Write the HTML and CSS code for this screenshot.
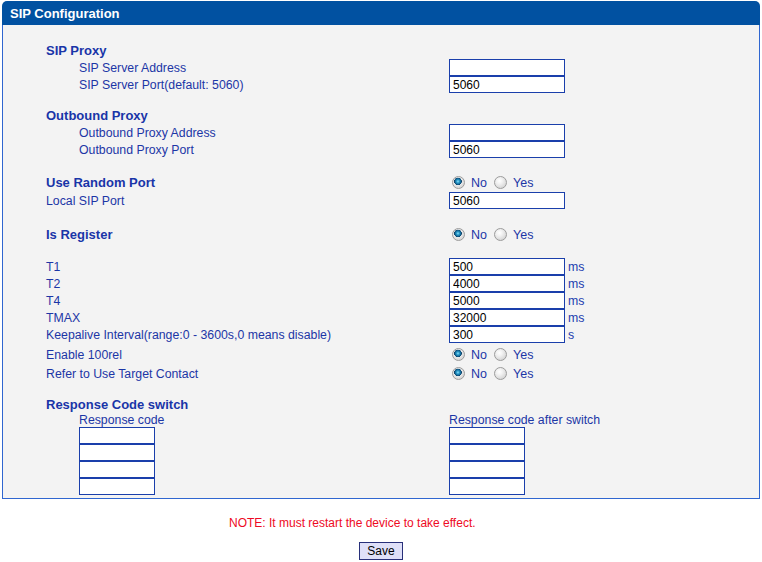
FILE: index.html
```html
<!DOCTYPE html>
<html lang="en">

<head>
    <meta charset="UTF-8">
    <meta name="viewport" content="width=device-width, initial-scale=1.0">
    <title>SIP Configuration</title>
    <link rel="stylesheet" href="styles.css">
</head>

<body>
    <div class="panel">
        <div class="panel-title">SIP Configuration</div>
        <div class="panel-body">
            <!-- SIP proxy -->
            <div class="row head"><span class="label">SIP Proxy</span></div>
            <div class="row">
                <span class="label sub">SIP Server Address</span>
                <span class="ctl"><input type="text" class="txt" value=""></span>
            </div>
            <div class="row">
                <span class="label sub">SIP Server Port(default: 5060)</span>
                <span class="ctl"><input type="text" class="txt" value="5060"></span>
            </div>

            <!-- outbound proxy -->
            <div class="row head gap14"><span class="label">Outbound Proxy</span></div>
            <div class="row">
                <span class="label sub">Outbound Proxy Address</span>
                <span class="ctl"><input type="text" class="txt" value=""></span>
            </div>
            <div class="row">
                <span class="label sub">Outbound Proxy Port</span>
                <span class="ctl"><input type="text" class="txt" value="5060"></span>
            </div>

            <div class="row radio-row head gap15">
                <span class="label">Use Random Port</span>
                <span class="ctl">
                    <input type="radio" name="randport" checked><span class="opt">No</span>
                    <input type="radio" name="randport"><span class="opt">Yes</span>
                </span>
            </div>
            <div class="row">
                <span class="label">Local SIP Port</span>
                <span class="ctl"><input type="text" class="txt" value="5060"></span>
            </div>

            <div class="row radio-row head gap16">
                <span class="label">Is Register</span>
                <span class="ctl">
                    <input type="radio" name="register" checked><span class="opt">No</span>
                    <input type="radio" name="register"><span class="opt">Yes</span>
                </span>
            </div>

            <!-- timers -->
            <div class="row gap14">
                <span class="label">T1</span>
                <span class="ctl"><input type="text" class="txt" value="500"><span class="unit">ms</span></span>
            </div>
            <div class="row">
                <span class="label">T2</span>
                <span class="ctl"><input type="text" class="txt" value="4000"><span class="unit">ms</span></span>
            </div>
            <div class="row">
                <span class="label">T4</span>
                <span class="ctl"><input type="text" class="txt" value="5000"><span class="unit">ms</span></span>
            </div>
            <div class="row">
                <span class="label">TMAX</span>
                <span class="ctl"><input type="text" class="txt" value="32000"><span class="unit">ms</span></span>
            </div>
            <div class="row">
                <span class="label">Keepalive Interval(range:0 - 3600s,0 means disable)</span>
                <span class="ctl"><input type="text" class="txt" value="300"><span class="unit">s</span></span>
            </div>

            <div class="row radio-row gap2">
                <span class="label">Enable 100rel</span>
                <span class="ctl">
                    <input type="radio" name="rel100" checked><span class="opt">No</span>
                    <input type="radio" name="rel100"><span class="opt">Yes</span>
                </span>
            </div>
            <div class="row radio-row">
                <span class="label">Refer to Use Target Contact</span>
                <span class="ctl">
                    <input type="radio" name="refer" checked><span class="opt">No</span>
                    <input type="radio" name="refer"><span class="opt">Yes</span>
                </span>
            </div>

            <!-- response code switch -->
            <div class="row head short gap13"><span class="label">Response Code switch</span></div>
            <div class="row caps">
                <span class="label sub">Response code</span>
                <span class="ctl">Response code after switch</span>
            </div>
            <div class="codes">
                <div class="code-col sub-col">
                    <input type="text" class="txt small">
                    <input type="text" class="txt small">
                    <input type="text" class="txt small">
                    <input type="text" class="txt small">
                </div>
                <div class="code-col">
                    <input type="text" class="txt small">
                    <input type="text" class="txt small">
                    <input type="text" class="txt small">
                    <input type="text" class="txt small">
                </div>
            </div>
        </div>
    </div>

    <p class="note">NOTE: It must restart the device to take effect.</p>
    <div class="actions"><button class="btn">Save</button></div>
</body>

</html>
```

FILE: styles.css
```css
body {
    margin: 1px 2px 0 2px;
    font-family: "Liberation Sans", Arial, sans-serif;
    font-size: 12.3px;
    color: #1c36a6;
    background: #fff;
}

.panel {
    width: 758px;
}

.panel-title {
    height: 24px;
    line-height: 25px;
    background: #0151a1;
    color: #fff;
    font-weight: bold;
    font-size: 13px;
    padding-left: 8px;
    border-radius: 5px 5px 0 0;
}

.panel-body {
    background: #f3f3f3;
    border: 1px solid #2f66d0;
    border-top: none;
    padding: 17px 0 3px 0;
}

.row {
    display: grid;
    grid-template-columns: 446px 1fr;
    height: 17px;
    align-items: center;
}

.label {
    padding-left: 43px;
    white-space: nowrap;
}

.label.sub {
    padding-left: 76px;
}

.head .label {
    font-weight: bold;
    font-size: 13px;
    color: #1935a8;
}

.radio-row {
    height: 19px;
}

.short {
    height: 16px;
}

.caps {
    height: 15px;
    align-items: end;
}

.gap2 { margin-top: 2px; }
.gap13 { margin-top: 13px; }
.gap14 { margin-top: 14px; }
.gap15 { margin-top: 15px; }
.gap16 { margin-top: 16px; }

.ctl {
    display: flex;
    align-items: center;
    white-space: nowrap;
}

.txt {
    box-sizing: border-box;
    width: 116px;
    height: 17px;
    margin: 0;
    padding: 0 3px;
    border: 1px solid #1a3fab;
    background: #fff;
    font-family: "Liberation Sans", Arial, sans-serif;
    font-size: 12px;
    color: #000;
    outline: none;
}

.txt.small {
    width: 76px;
    display: block;
}

.unit {
    margin-left: 3px;
    color: #1c40b0;
}

/* xp style radio buttons */
input[type="radio"] {
    appearance: none;
    -webkit-appearance: none;
    box-sizing: border-box;
    width: 13px;
    height: 13px;
    margin: 0 0 0 3px;
    border: 1px solid #9c9c9c;
    border-radius: 50%;
    background: radial-gradient(circle at 40% 35%, #ffffff 0, #f2f2f2 30%, #c8c8c8 100%);
}

input[type="radio"]:checked {
    background:
        radial-gradient(circle at 45% 40%, #8fe0f6 0, #2a9ccc 1.5px, #10608e 3px, #0c3f66 3.6px, transparent 4px),
        radial-gradient(circle at 40% 35%, #ffffff 0, #f2f2f2 30%, #c8c8c8 100%);
}

.opt {
    margin-left: 6px;
    margin-right: 4px;
    font-size: 12.5px;
}

.codes {
    display: grid;
    grid-template-columns: 446px 1fr;
}

.sub-col {
    padding-left: 76px;
}

.note {
    margin: 17px 0 0 0;
    padding-left: 227px;
    color: #ee0a24;
    font-size: 12px;
    line-height: 14px;
}

.actions {
    padding-left: 357px;
    margin-top: 12px;
}

.btn {
    box-sizing: border-box;
    width: 44px;
    height: 18px;
    padding: 0;
    border: 1px solid #28307a;
    background: #dfe0f8;
    font-family: "Liberation Sans", Arial, sans-serif;
    font-size: 12px;
    color: #000;
}
```
